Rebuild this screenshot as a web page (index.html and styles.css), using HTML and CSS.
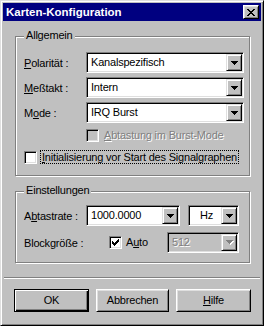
FILE: index.html
```html
<!DOCTYPE html>
<html lang="de">
<head>
<meta charset="utf-8">
<title>Karten-Konfiguration</title>
<link rel="stylesheet" href="styles.css">
</head>
<body>
<div class="window">
  <div class="titlebar">
    <span class="title">Karten-Konfiguration</span>
    <span class="close">
      <svg width="8" height="7" viewBox="0 0 8 7" shape-rendering="crispEdges"><path d="M0 0h2v1h-2zM6 0h2v1h-2zM1 1h2v1h-2zM5 1h2v1h-2zM2 2h4v1h-4zM3 3h2v1h-2zM2 4h4v1h-4zM1 5h2v1h-2zM5 5h2v1h-2zM0 6h2v1h-2zM6 6h2v1h-2z" fill="#000"/></svg>
    </span>
  </div>

  <div class="group group-general">
    <div class="legend">Allgemein</div>
    <div class="form-row first">
      <span class="lbl"><u>P</u>olarität :</span>
      <div class="combo w-wide">
        <span class="val">Kanalspezifisch</span>
        <span class="dd"><svg width="7" height="4" viewBox="0 0 7 4" shape-rendering="crispEdges"><path d="M0 0h7v1h-7zM1 1h5v1h-5zM2 2h3v1h-3zM3 3h1v1h-1z" fill="#000"/></svg></span>
      </div>
    </div>
    <div class="form-row">
      <span class="lbl"><u>M</u>eßtakt :</span>
      <div class="combo w-wide">
        <span class="val">Intern</span>
        <span class="dd"><svg width="7" height="4" viewBox="0 0 7 4" shape-rendering="crispEdges"><path d="M0 0h7v1h-7zM1 1h5v1h-5zM2 2h3v1h-3zM3 3h1v1h-1z" fill="#000"/></svg></span>
      </div>
    </div>
    <div class="form-row">
      <span class="lbl">M<u>o</u>de :</span>
      <div class="combo w-wide">
        <span class="val">IRQ Burst</span>
        <span class="dd"><svg width="7" height="4" viewBox="0 0 7 4" shape-rendering="crispEdges"><path d="M0 0h7v1h-7zM1 1h5v1h-5zM2 2h3v1h-3zM3 3h1v1h-1z" fill="#000"/></svg></span>
      </div>
    </div>
    <div class="check-row burst">
      <span class="cb cb-disabled"></span>
      <span class="cb-text disabled-text"><u>A</u>btastung im Burst-Mode</span>
    </div>
    <div class="check-row init">
      <span class="cb"></span>
      <span class="cb-text focus"><u>I</u>nitialisierung vor Start des Signalgraphen</span>
    </div>
  </div>

  <div class="group group-settings">
    <div class="legend">Einstellungen</div>
    <div class="form-row first">
      <span class="lbl">A<u>b</u>tastrate :</span>
      <div class="combo w-rate">
        <span class="val">1000.0000</span>
        <span class="dd"><svg width="7" height="4" viewBox="0 0 7 4" shape-rendering="crispEdges"><path d="M0 0h7v1h-7zM1 1h5v1h-5zM2 2h3v1h-3zM3 3h1v1h-1z" fill="#000"/></svg></span>
      </div>
      <div class="combo w-unit">
        <span class="val unit">Hz</span>
        <span class="dd"><svg width="7" height="4" viewBox="0 0 7 4" shape-rendering="crispEdges"><path d="M0 0h7v1h-7zM1 1h5v1h-5zM2 2h3v1h-3zM3 3h1v1h-1z" fill="#000"/></svg></span>
      </div>
    </div>
    <div class="form-row second">
      <span class="lbl">Blockgröße :</span>
      <div class="auto-box">
        <span class="cb">
          <svg width="7" height="7" viewBox="0 0 7 7" shape-rendering="crispEdges"><path d="M0 2h1v3h-1zM1 3h1v3h-1zM2 4h1v3h-1zM3 3h1v3h-1zM4 2h1v3h-1zM5 1h1v3h-1zM6 0h1v3h-1z" fill="#000"/></svg>
        </span>
        <span class="cb-text">A<u>u</u>to</span>
      </div>
      <div class="combo combo-disabled w-block">
        <span class="val disabled-text">512</span>
        <span class="dd"><svg width="8" height="5" viewBox="0 0 8 5" shape-rendering="crispEdges"><path d="M1 1h7v1h-7zM2 2h5v1h-5zM3 3h3v1h-3zM4 4h1v1h-1z" fill="#fff"/><path d="M0 0h7v1h-7zM1 1h5v1h-5zM2 2h3v1h-3zM3 3h1v1h-1z" fill="#808080"/></svg></span>
      </div>
    </div>
  </div>

  <div class="separator"></div>

  <div class="buttons">
    <span class="btn btn-default"><span class="btn-inner">OK</span></span>
    <span class="btn btn-cancel"><span class="btn-inner">Abbrechen</span></span>
    <span class="btn"><span class="btn-inner"><u>H</u>ilfe</span></span>
  </div>
</div>
</body>
</html>
```

FILE: styles.css
```css
* {
  box-sizing: border-box;
}

html,
body {
  margin: 0;
  padding: 0;
}

body {
  background: #c0c0c0;
  font-family: "Liberation Sans", Arial, sans-serif;
  font-size: 11px;
  letter-spacing: -0.2px;
  color: #000;
}

u {
  text-decoration: underline;
  text-underline-offset: 1px;
}

.window {
  width: 264px;
  height: 326px;
  background: #c0c0c0;
  border: 1px solid;
  border-color: #dfdfdf #000 #000 #dfdfdf;
  box-shadow: inset 1px 1px #fff, inset -1px -1px #808080;
  padding: 2px;
  display: flex;
  flex-direction: column;
}

.titlebar {
  height: 18px;
  flex: none;
  background: #000080;
  display: flex;
  align-items: center;
  padding: 0 2px 0 3px;
}

.title {
  flex: 1;
  color: #fff;
  font-weight: bold;
  font-size: 11.5px;
  letter-spacing: 0;
  line-height: 18px;
}

.close {
  width: 16px;
  height: 14px;
  background: #c0c0c0;
  border: 1px solid;
  border-color: #fff #000 #000 #fff;
  box-shadow: inset 1px 1px #dfdfdf, inset -1px -1px #808080;
  display: flex;
  justify-content: center;
  align-items: flex-start;
  padding-top: 3px;
}

.close svg {
  display: block;
}

.group {
  flex: none;
  width: 235px;
  margin-left: 12px;
  border: 1px solid #808080;
  box-shadow: inset 1px 1px #fff, 1px 1px #fff;
  padding-left: 8px;
  display: flex;
  flex-direction: column;
}

.group-general {
  margin-top: 15px;
  height: 140px;
}

.group-settings {
  margin-top: 15px;
  height: 72px;
}

.legend {
  align-self: flex-start;
  margin-top: -8px;
  height: 13px;
  line-height: 13px;
  padding: 0 2px;
  background: #c0c0c0;
}

.form-row {
  display: flex;
  align-items: center;
  height: 21px;
  margin-top: 4px;
}

.group-general .form-row.first {
  margin-top: 10px;
}

.group-settings .form-row.first {
  margin-top: 8px;
}

.group-settings .form-row.second {
  margin-top: 6px;
}

.lbl {
  width: 62px;
  flex: none;
  white-space: nowrap;
}

.combo {
  height: 21px;
  flex: none;
  background: #fff;
  border: 1px solid;
  border-color: #808080 #fff #fff #808080;
  box-shadow: inset 1px 1px #000, inset -1px -1px #dfdfdf;
  padding: 1px;
  display: flex;
}

.combo-disabled {
  background: #c0c0c0;
}

.w-wide {
  width: 158px;
}

.w-rate {
  width: 94px;
}

.w-unit {
  width: 51px;
  margin-left: 8px;
}

.w-block {
  width: 72px;
}

.val {
  flex: 1;
  padding-left: 3px;
  line-height: 17px;
  white-space: nowrap;
  overflow: hidden;
}

.val.unit {
  padding-left: 10px;
}

.dd {
  width: 16px;
  height: 17px;
  flex: none;
  background: #c0c0c0;
  border: 1px solid;
  border-color: #dfdfdf #000 #000 #dfdfdf;
  box-shadow: inset 1px 1px #fff, inset -1px -1px #808080;
  display: flex;
  align-items: center;
  justify-content: center;
  padding-left: 1px;
}

.dd svg {
  display: block;
}

.check-row {
  display: flex;
  align-items: center;
}

.check-row.burst {
  margin-top: 6px;
  margin-left: 62px;
}

.check-row.init {
  margin-top: 8px;
}

.cb {
  width: 13px;
  height: 13px;
  flex: none;
  background: #fff;
  border: 1px solid;
  border-color: #808080 #fff #fff #808080;
  box-shadow: inset 1px 1px #000, inset -1px -1px #dfdfdf;
  padding: 2px;
}

.cb svg {
  display: block;
}

.cb-disabled {
  background: #c0c0c0;
}

.cb-text {
  margin-left: 5px;
  line-height: 13px;
  white-space: nowrap;
}

.focus {
  margin-left: 3px;
  padding: 0 1px;
  border: 1px dotted #000;
  line-height: 12px;
}

.disabled-text {
  color: #808080;
  text-shadow: 1px 1px 0 #fff;
}

.auto-box {
  width: 81px;
  flex: none;
  display: flex;
  align-items: center;
  padding-left: 23px;
}

.auto-box .cb-text {
  margin-left: 4px;
}

.separator {
  flex: none;
  height: 2px;
  margin: 14px 1px 0;
  border-top: 1px solid #808080;
  border-bottom: 1px solid #fff;
}

.buttons {
  flex: none;
  display: flex;
  gap: 7px;
  margin-top: 10px;
  padding-left: 11px;
}

.btn {
  width: 75px;
  height: 23px;
  flex: none;
  background: #c0c0c0;
  border: 1px solid;
  border-color: #fff #000 #000 #fff;
  box-shadow: inset 1px 1px #dfdfdf, inset -1px -1px #808080;
  display: flex;
}

.btn-cancel {
  width: 73px;
}

.btn-default {
  border: 1px solid #000;
  box-shadow: inset 1px 1px #fff, inset -1px -1px #000, inset -2px -2px #808080;
}

.btn-inner {
  flex: 1;
  display: flex;
  align-items: center;
  justify-content: center;
  line-height: 13px;
}
```
